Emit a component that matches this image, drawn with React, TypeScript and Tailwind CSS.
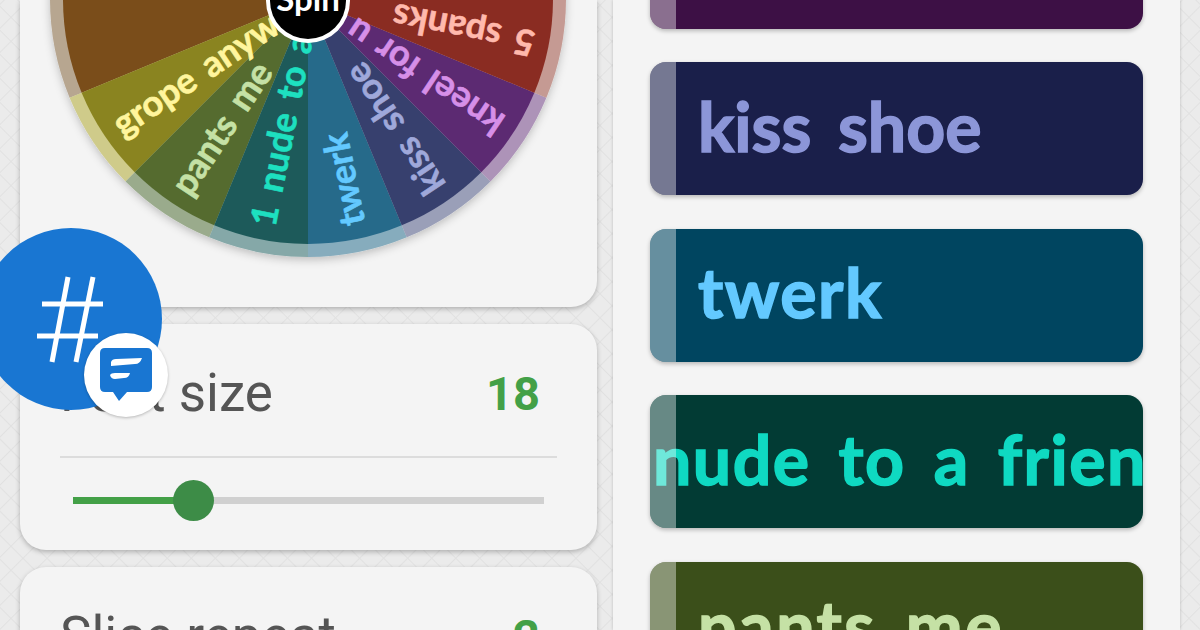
const slices = [
  { deg: 78.75, bg: "#7a4d1a", rim: "#b7a690", fg: "#ffe0a0", text: "" },
  { deg: 56.25, bg: "#8a8420", rim: "#cfcb8a", fg: "#fff59d", text: "grope anywhere" },
  { deg: 33.75, bg: "#556b2f", rim: "#9aab8c", fg: "#c5e1a5", text: "pants me" },
  { deg: 11.25, bg: "#1d5a5a", rim: "#85a8a8", fg: "#1de0c0", text: "1 nude to a friend" },
  { deg: -11.25, bg: "#266a8a", rim: "#86acbd", fg: "#63c9ff", text: "twerk" },
  { deg: -33.75, bg: "#37406e", rim: "#9a9fb8", fg: "#9fa8da", text: "kiss shoe" },
  { deg: -56.25, bg: "#5c2a72", rim: "#ad93b8", fg: "#d68fe8", text: "kneel for u" },
  { deg: -78.75, bg: "#8a2c22", rim: "#c59a93", fg: "#ffb9ad", text: "5 spanks" },
  { deg: -101.25, bg: "#6f5a1a", rim: "#b5ab86", fg: "#ffe0a0", text: "" },
  { deg: 101.25, bg: "#8a3418", rim: "#c0a090", fg: "#ffcc99", text: "" },
];

const R = 258;
const CY = -1;
const CX = -1;

// wedge centred on `deg`, measured from straight down, going clockwise toward the left
function wedge(deg: number, r: number) {
  const a = ((deg - 11.25) * Math.PI) / 180;
  const b = ((deg + 11.25) * Math.PI) / 180;
  const x1 = -Math.sin(a) * r + CX;
  const y1 = Math.cos(a) * r + CY;
  const x2 = -Math.sin(b) * r + CX;
  const y2 = Math.cos(b) * r + CY;
  return `M${CX} ${CY} L${x1} ${y1} A${r} ${r} 0 0 1 ${x2} ${y2} Z`;
}

function Wheel() {
  return (
    <svg viewBox="-270 0 540 272" className="w-[540px] h-[272px] shrink-0">
      <defs>
        <filter id="wheelShadow" x="-10%" y="-10%" width="120%" height="120%">
          <feDropShadow dx="0" dy="3" stdDeviation="4" floodColor="#000" floodOpacity="0.22" />
        </filter>
      </defs>
      <g filter="url(#wheelShadow)">
        {slices.map((s) => (
          <path key={s.deg} d={wedge(s.deg, R)} fill={s.rim} />
        ))}
      </g>
      {slices.map((s) => (
        <path key={s.deg} d={wedge(s.deg, R - 13)} fill={s.bg} />
      ))}
      {slices.map((s) =>
        s.text ? (
          // every label starts at the rim and reads toward the hub
          <g key={s.text} transform={`rotate(${270 + s.deg} ${CX} ${CY})`}>
            <text
              x={CX - 231}
              y={CY}
              dy="0.35em"
              fontFamily="Lato, sans-serif"
              fontWeight={700}
              fontSize={36}
              wordSpacing={5}
              fill={s.fg}
              stroke={s.fg}
              strokeWidth={0.6}
              strokeLinejoin="round"
            >
              {s.text}
            </text>
          </g>
        ) : null
      )}
      <circle cx={CX} cy="1" r="42" fill="#fff" />
      <circle cx={CX} cy="1" r="38" fill="#000" />
      <text
        x={CX}
        y="11"
        textAnchor="middle"
        fontFamily="Lato, sans-serif"
        fontWeight={700}
        fontSize={33}
        fill="#fff"
      >
        Spin
      </text>
    </svg>
  );
}

function SettingCard({ label, value, children }: { label: string; value: string; children?: React.ReactNode }) {
  return (
    <div className="shrink-0 rounded-[26px] bg-[#f4f4f4] shadow-[0_2px_5px_rgba(0,0,0,0.25)] px-10 pt-[40px] h-[226px]">
      <div className="flex items-center justify-between h-[58px] pr-[17px]">
        <span className="text-[53px] leading-none text-[#555] font-['Roboto',sans-serif]">{label}</span>
        <span className="text-[47px] leading-none font-bold text-[#43a047] font-['Roboto',sans-serif]">{value}</span>
      </div>
      {children}
    </div>
  );
}

function ChatHead() {
  return (
    <div className="absolute left-[-20px] top-[228px] w-[182px] h-[182px] rounded-full bg-[#1976d2]">
      <svg viewBox="0 0 182 182" className="w-full h-full">
        <g stroke="#fff" strokeWidth="5" fill="none">
          <path d="M88 49 L72 134" />
          <path d="M113 49 L96 134" />
          <path d="M62 76 H123" />
          <path d="M57 108 H118" />
        </g>
      </svg>
      <div className="absolute left-[104px] top-[105px] w-[84px] h-[84px] rounded-full bg-white flex items-center justify-center shadow-[0_1px_3px_rgba(0,0,0,0.25)]">
        <svg viewBox="0 0 54 56" className="w-[54px] h-[56px]">
          <path
            d="M6 1 H48 Q53 1 53 6 V40 Q53 45 48 45 H28 L20 54 L14 45 H6 Q1 45 1 40 V6 Q1 1 6 1 Z"
            fill="#1976d2"
          />
          <path d="M12 15 Q13 12 17 12 L43 11 Q41 17 36 17 L12 19 Z" fill="#fff" />
          <path d="M11 28 Q12 26 16 26 H31 Q30 31 25 31 L16 32 Q12 32 11 28 Z" fill="#fff" />
        </svg>
      </div>
    </div>
  );
}

const rows = [
  { text: "kneel for u", bg: "#3d1045", fg: "#ce93d8", cls: "ml-[48px] tracking-[1.5px]" },
  { text: "kiss shoe", bg: "#1a1f4a", fg: "#8c96d8", cls: "ml-[48px] tracking-[0px]" },
  { text: "twerk", bg: "#004560", fg: "#63c9ff", cls: "ml-[48px] tracking-[1.5px]" },
  { text: "1 nude to a friend", bg: "#023b34", fg: "#0fd9c2", cls: "ml-[-66px] tracking-[1.5px]" },
  { text: "pants me", bg: "#3b4f1a", fg: "#c5e1a5", cls: "ml-[48px] tracking-[2.5px]" },
];

function SliceRow({ text, bg, fg, cls }: { text: string; bg: string; fg: string; cls: string }) {
  return (
    <div
      className="relative shrink-0 h-[133px] pb-[6px] rounded-2xl overflow-hidden shadow-[0_2px_4px_rgba(0,0,0,0.25)] flex items-center justify-start"
      style={{ backgroundColor: bg }}
    >
      <span
        className={`font-['Lato',sans-serif] font-bold text-[68px] leading-none whitespace-nowrap [word-spacing:10px] ${cls}`}
        style={{ color: fg, WebkitTextStroke: `1.5px ${fg}` }}
      >
        {text}
      </span>
      <div className="absolute left-0 top-0 bottom-0 w-[26px] bg-white/40" />
    </div>
  );
}

export default function App() {
  return (
    <div className="relative w-[1200px] h-[630px] overflow-hidden bg-[#ebebeb] bg-[repeating-linear-gradient(45deg,transparent_0px,transparent_15px,#e1e1e1_16px,transparent_17px),repeating-linear-gradient(-45deg,transparent_0px,transparent_15px,#e1e1e1_16px,transparent_17px)] flex">
      <div className="w-[577px] ml-5 flex flex-col gap-[17px] shrink-0">
        <div className="h-[307px] shrink-0 rounded-b-[26px] bg-[#f4f4f4] shadow-[0_2px_5px_rgba(0,0,0,0.25)] flex justify-center overflow-hidden">
          <Wheel />
        </div>
        <SettingCard label="Font size" value="18">
          <div className="h-[2px] bg-[#dcdcdc] mt-[34px]" />
          <div className="relative mx-[13px] mt-[39px] h-[7px] bg-[#d0d0d0]">
            <div className="absolute left-0 top-0 h-full w-[120px] bg-[#43a047]" />
            <div className="absolute left-[100px] top-[-17px] w-[41px] h-[41px] rounded-full bg-[#3d8c47]" />
          </div>
        </SettingCard>
        <SettingCard label="Slice repeat" value="2" />
      </div>
      <div className="ml-4 w-[567px] shrink-0 bg-[#f4f4f4] shadow-[0_0_3px_rgba(0,0,0,0.2)] px-[37px]">
        <div className="flex flex-col gap-[33.5px] mt-[-104.5px]">
          {rows.map((r) => (
            <SliceRow key={r.bg} text={r.text} bg={r.bg} fg={r.fg} cls={r.cls} />
          ))}
        </div>
      </div>
      <ChatHead />
    </div>
  );
}
